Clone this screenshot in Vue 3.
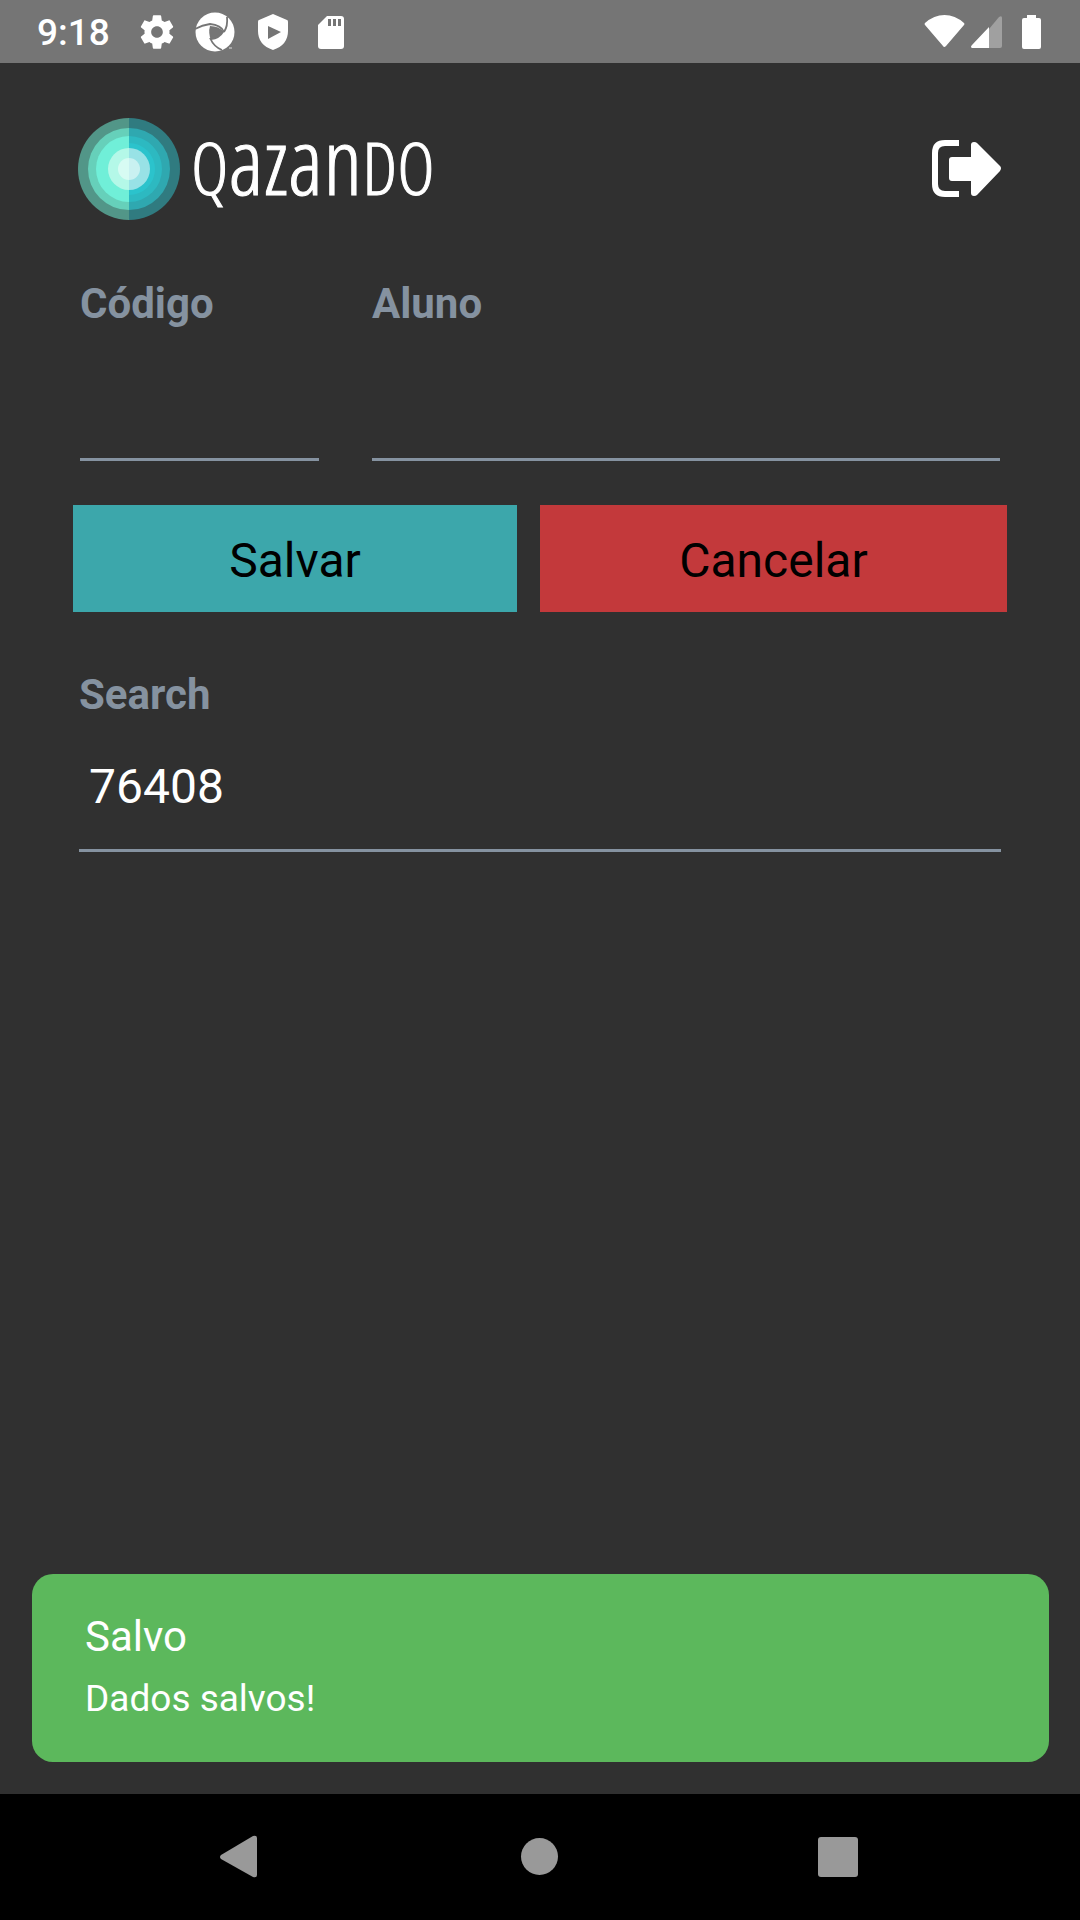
<script setup>
import { ref } from 'vue'

const code = ref('')
const student = ref('')
const search = ref('76408')
</script>

<template>
  <div class="screen">
    <header class="status-bar">
      <div class="status-left">
        <time class="clock">9:18</time>
        <div class="notifications">
          <svg width="40" height="40" viewBox="0 0 24 24" fill="#fff" aria-hidden="true">
            <path d="M19.43 12.98c.04-.32.07-.64.07-.98s-.03-.66-.07-.98l2.11-1.65c.19-.15.24-.42.12-.64l-2-3.46c-.12-.22-.39-.3-.61-.22l-2.49 1c-.52-.4-1.08-.73-1.69-.98l-.38-2.65C14.46 2.18 14.25 2 14 2h-4c-.25 0-.46.18-.49.42l-.38 2.65c-.61.25-1.17.59-1.69.98l-2.49-1c-.23-.09-.49 0-.61.22l-2 3.46c-.13.22-.07.49.12.64l2.11 1.65c-.04.32-.07.65-.07.98s.03.66.07.98l-2.11 1.65c-.19.15-.24.42-.12.64l2 3.46c.12.22.39.3.61.22l2.49-1c.52.4 1.08.73 1.69.98l.38 2.65c.03.24.24.42.49.42h4c.25 0 .46-.18.49-.42l.38-2.65c.61-.25 1.17-.59 1.69-.98l2.49 1c.23.09.49 0 .61-.22l2-3.46c.12-.22.07-.49-.12-.64l-2.11-1.65zM12 15.5c-1.93 0-3.5-1.57-3.5-3.5s1.57-3.5 3.5-3.5 3.5 1.57 3.5 3.5-1.57 3.5-3.5 3.5z" />
          </svg>
          <svg width="40" height="40" viewBox="0 0 40 40" aria-hidden="true">
            <circle cx="20" cy="20" r="19.500" fill="#fff" />
            <path d="M15 14Q24 14 29 20Q25 27 16 28Q13 21 15 14z" fill="#757575" />
            <g fill="none" stroke="#757575" stroke-width="1.800">
              <path d="M0 17Q7 13 15 12Q26 13 29 20" />
              <path d="M32 5Q33 14 29 20" />
              <path d="M15 26Q19 35 27 38" />
            </g>
            <path d="M34 36h3" stroke="#ddd" />
          </svg>
          <svg width="40" height="40" viewBox="0 0 40 40" aria-hidden="true">
            <path d="M20 2L34 8Q35 8 35 10V19Q35 33 20 38Q5 33 5 19V10Q5 8 6 8z" fill="#fff" />
            <path d="M15 14V27L28 20z" fill="#757575" />
          </svg>
          <svg width="40" height="40" viewBox="0 0 40 40" aria-hidden="true">
            <path d="M16 4H30Q33 4 33 7V34Q33 37 30 37H10Q7 37 7 34V13z" fill="#fff" />
            <path d="M17 7h3v7h-3zM22 7h3v7h-3zM27 7h3v7h-3z" fill="#757575" />
          </svg>
        </div>
      </div>
      <div class="status-right">
        <svg width="42" height="40" viewBox="0 0 42 40" aria-hidden="true">
          <path d="M1 11Q10 3 20.500 3T40 11Q41 12 40 13L22 34Q20 36 19 34L1 13Q0 12 1 11z" fill="#fff" />
        </svg>
        <svg width="42" height="40" viewBox="0 0 42 40" aria-hidden="true">
          <path d="M23 17L33 5Q36 3 36 6V34Q36 36 34 36H23z" fill="#a0a0a0" />
          <path d="M23 15V36H6Q4 35 6 33z" fill="#fff" />
        </svg>
        <svg width="42" height="40" viewBox="0 0 42 40" aria-hidden="true">
          <path d="M19 3h9v3h3q2 0 2 2V35q0 2-2 2H16q-2 0-2-2V8q0-2 2-2h3z" fill="#fff" />
        </svg>
      </div>
    </header>

    <main class="content">
      <div class="app-bar">
        <div class="brand">
          <svg width="102" height="102" viewBox="0 0 102 102" aria-hidden="true">
            <path d="M51 0A51 51 0 0 0 51 102z" fill="#529688" />
            <path d="M51 0A51 51 0 0 1 51 102z" fill="#307b80" />
            <path d="M51 10A41 41 0 0 0 51 92z" fill="#66d0ba" />
            <path d="M51 10A41 41 0 0 1 51 92z" fill="#2fa8b0" />
            <path d="M51 18A33 33 0 0 0 51 84z" fill="#70efd8" />
            <path d="M51 18A33 33 0 0 1 51 84z" fill="#2db9c1" />
            <path d="M51 25A26 26 0 0 1 51 77z" fill="#2bc3cc" />
            <path d="M51 30A21 21 0 0 0 51 72z" fill="#b4f8e8" />
            <path d="M51 30A21 21 0 0 1 51 72z" fill="#98e2e6" />
            <path d="M51 40A11 11 0 0 0 51 62z" fill="#d7fbf3" />
            <path d="M51 40A11 11 0 0 1 51 62z" fill="#c9f1f1" />
          </svg>
          <span class="wordmark">Q<span class="wordmark-low">azan</span>DO</span>
        </div>
        <button class="logout" type="button" aria-label="Sair">
          <svg width="70" height="58" viewBox="0 0 70 58" aria-hidden="true">
            <path d="M27 3H13Q3 3 3 13V44Q3 54 13 54H27" fill="none" stroke="#fff" stroke-width="6" stroke-linejoin="round" />
            <path d="M17 20Q17 17 20 17H39V5Q39 2 42 2Q44 2 45 3L68 26Q70 28 68 31L45 55Q44 56 42 56Q39 56 39 53V41H20Q17 41 17 38z" fill="#fff" />
          </svg>
        </button>
      </div>

      <form class="form" @submit.prevent>
        <div class="fields">
          <div class="field field-code">
            <label for="code">Código</label>
            <input id="code" v-model="code" type="text" />
          </div>
          <div class="field field-student">
            <label for="student">Aluno</label>
            <input id="student" v-model="student" type="text" />
          </div>
        </div>
        <div class="actions">
          <button class="action save" type="submit">Salvar</button>
          <button class="action cancel" type="button">Cancelar</button>
        </div>
      </form>

      <div class="field search">
        <label for="search">Search</label>
        <input id="search" v-model="search" type="text" />
      </div>

      <div class="toast" role="status">
        <p class="toast-title">Salvo</p>
        <p class="toast-text">Dados salvos!</p>
      </div>
    </main>

    <nav class="nav-bar">
      <button type="button" aria-label="Voltar">
        <svg width="44" height="44" viewBox="0 0 44 44" aria-hidden="true">
          <path d="M3 20L35 1Q39 0 39 3V40Q39 43 35 42L3 24Q1 22 3 20z" fill="#999" />
        </svg>
      </button>
      <button type="button" aria-label="Início">
        <svg width="44" height="44" viewBox="0 0 44 44" aria-hidden="true">
          <circle cx="21.500" cy="21.500" r="18.500" fill="#999" />
        </svg>
      </button>
      <button type="button" aria-label="Recentes">
        <svg width="44" height="44" viewBox="0 0 44 44" aria-hidden="true">
          <rect x="0" y="2" width="40" height="40" rx="3" fill="#999" />
        </svg>
      </button>
    </nav>
  </div>
</template>

<style>
body {
  margin: 0;
  background: #303030;
}
</style>

<style scoped>
.screen {
  display: flex;
  flex-direction: column;
  min-height: 100vh;
  background: #303030;
  color: #fff;
  font-family: Roboto, "Liberation Sans", sans-serif;
}

svg {
  display: block;
}

button {
  padding: 0;
  border: 0;
  background: none;
  color: inherit;
  font-family: inherit;
}

.status-bar {
  display: flex;
  justify-content: space-between;
  align-items: center;
  height: 63px;
  padding: 0 30px 0 37px;
  background: #757575;
}

.status-left {
  display: flex;
  align-items: center;
  gap: 27px;
}

.clock {
  padding-top: 2px;
  font-size: 37px;
  font-weight: 500;
  line-height: 44px;
}

.notifications {
  display: flex;
  gap: 18px;
}

.status-right {
  display: flex;
}

.content {
  flex: 1;
  display: flex;
  flex-direction: column;
}

.app-bar {
  display: flex;
  justify-content: space-between;
  align-items: center;
  padding: 55px 78px 0;
}

.brand {
  display: flex;
  align-items: center;
  gap: 11px;
}

.wordmark {
  padding-bottom: 12px;
  font-family: "Open Sans Condensed Light", "Open Sans Condensed", Roboto, sans-serif;
  font-size: 72px;
  font-weight: 300;
  line-height: 80px;
  -webkit-text-stroke: 1px #fff;
}

.wordmark-low {
  font-size: 92px;
}

.form {
  padding-top: 56px;
}

.fields {
  display: flex;
  gap: 53px;
  padding: 0 80px;
}

.field {
  display: flex;
  flex-direction: column;
  min-width: 0;
}

.field-code {
  flex: 239 1 0;
}

.field-student {
  flex: 628 1 0;
}

.field label {
  color: #8592a0;
  font-size: 42px;
  font-weight: 700;
  line-height: 56px;
}

.field input {
  box-sizing: border-box;
  width: 100%;
  height: 129px;
  padding: 0 10px;
  border: 0;
  border-bottom: 3px solid #8592a0;
  outline: 0;
  background: transparent;
  color: #fff;
  font-family: inherit;
  font-size: 48px;
}

.actions {
  display: flex;
  gap: 23px;
  padding: 44px 73px 0;
}

.action {
  height: 107px;
  padding-top: 3px;
  color: #000;
  font-size: 48px;
}

.save {
  flex: 444 1 0;
  background: #3ca7ab;
}

.cancel {
  flex: 467 1 0;
  background: #c3393b;
}

.search {
  padding: 55px 79px 0;
}

.toast {
  margin: auto 31px 32px 32px;
  padding: 35px 53px 39px;
  border-radius: 21px;
  background: #5cb85c;
}

.toast p {
  margin: 0;
}

.toast-title {
  font-size: 42px;
  line-height: 56px;
}

.toast-text {
  padding-top: 10px;
  font-size: 37px;
  line-height: 48px;
}

.nav-bar {
  display: flex;
  align-items: center;
  height: 126px;
  padding: 0 90px;
  background: #000;
}

.nav-bar button {
  flex: 1;
  display: flex;
  justify-content: center;
}
</style>
